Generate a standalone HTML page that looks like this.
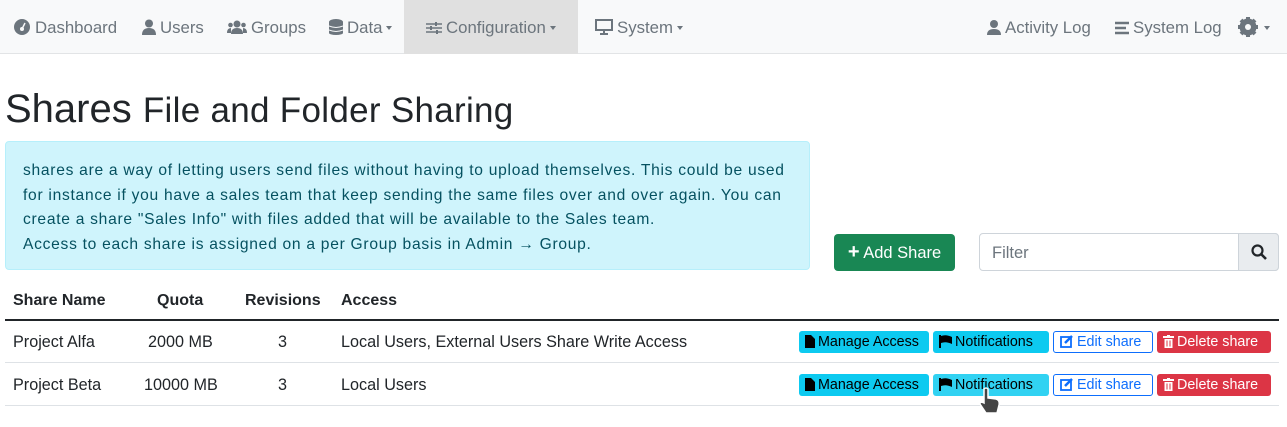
<!DOCTYPE html><html><head><style>
body{margin:0;width:1287px;height:427px;background:#fff;font-family:"Liberation Sans",sans-serif;color:#212529;position:relative;overflow:hidden}
.nav{position:absolute;left:0;top:0;width:1287px;height:53px;background:#f8f9fa;border-bottom:1px solid #e2e4e6}
.ni{position:absolute;top:1px;height:53px;line-height:53px;font-size:16.8px;color:#6c757d;white-space:nowrap}
.ni svg{vertical-align:-2px;margin-right:4px}
.car{display:inline-block;border-top:4px solid #6c757d;border-left:3.5px solid transparent;border-right:3.5px solid transparent;vertical-align:3px;margin-left:4px}
.t{position:absolute;white-space:nowrap}
.btn{position:absolute;height:22px;line-height:22px;font-size:14.3px;border-radius:3px;box-sizing:border-box;white-space:nowrap;padding-left:6px}
.bi{background:#0dcaf0;color:#000;width:130px}
.bn{background:#0dcaf0;color:#000;width:116px}
.be{border:1px solid #0d6efd;color:#0d6efd;width:100px;line-height:20px}
.bd{background:#dc3545;color:#fff;width:114px}
.btn svg{vertical-align:-2px;margin-right:3px}
.th{font-weight:bold;font-size:16px}
.td{font-size:16.2px}
</style></head><body>
<div class="nav"></div>
<div style="position:absolute;left:404px;top:0;width:174px;height:54px;background:#e0e0e0"></div>
<div class="ni" style="left:13px"><svg width="18" height="16" viewBox="0 0 18 16"><circle cx="9" cy="8" r="8" fill="#6c757d"/><circle cx="9" cy="10" r="2" fill="#f8f9fa"/><path d="M9 10 L12 4" stroke="#f8f9fa" stroke-width="1.5"/></svg>Dashboard</div>
<div class="ni" style="left:142px"><svg width="14" height="16"><circle cx="7" cy="4.5" r="4" fill="#6c757d"/><path d="M0 16 Q0 9 7 9 Q14 9 14 16Z" fill="#6c757d"/></svg>Users</div>
<div class="ni" style="left:227px"><svg width="20" height="16"><circle cx="10" cy="5" r="3.5" fill="#6c757d"/><circle cx="3.5" cy="6" r="2.3" fill="#6c757d"/><circle cx="16.5" cy="6" r="2.3" fill="#6c757d"/><path d="M4 15 Q4 9 10 9 Q16 9 16 15Z M0 14 Q0 9 4 9 L4 14Z M20 14 Q20 9 16 9 L16 14Z" fill="#6c757d"/></svg>Groups</div>
<div class="ni" style="left:329px"><svg width="14" height="16"><ellipse cx="7" cy="3" rx="7" ry="3" fill="#6c757d"/><rect x="0" y="3" width="14" height="11" fill="#6c757d"/><ellipse cx="7" cy="14" rx="7" ry="2" fill="#6c757d"/><path d="M0 7 Q7 10 14 7 M0 11 Q7 14 14 11" stroke="#f8f9fa" fill="none"/></svg>Data<span class="car"></span></div>
<div class="ni" style="left:426px"><svg width="16" height="14"><path d="M0 3H16M0 7H16M0 11H16" stroke="#6c757d" stroke-width="1.5"/><rect x="9" y="1" width="2" height="4" fill="#6c757d"/><rect x="4" y="5" width="2" height="4" fill="#6c757d"/><rect x="10" y="9" width="2" height="4" fill="#6c757d"/></svg>Configuration<span class="car"></span></div>
<div class="ni" style="left:595px"><svg width="18" height="16"><rect x="1" y="1" width="16" height="10" fill="none" stroke="#6c757d" stroke-width="2"/><path d="M9 11V15M5 15H13" stroke="#6c757d" stroke-width="2"/></svg>System<span class="car"></span></div>
<div class="ni" style="left:987px"><svg width="14" height="16"><circle cx="7" cy="5" r="4" fill="#6c757d"/><path d="M0 16 Q0 10 7 10 Q14 10 14 16Z" fill="#6c757d"/></svg>Activity Log</div>
<div class="ni" style="left:1115px"><svg width="14" height="14"><path d="M0 2H14M0 7H11M0 12H14" stroke="#6c757d" stroke-width="2.5"/></svg>System Log</div>
<div class="ni" style="left:1238px"><svg width="20" height="20" viewBox="0 0 20 20" style="vertical-align:-4px"><circle cx="10" cy="10" r="6.5" fill="none" stroke="#6c757d" stroke-width="4"/><g stroke="#6c757d" stroke-width="4"><path d="M10 0V20M0 10H20M3 3L17 17M17 3L3 17"/></g><circle cx="10" cy="10" r="3" fill="#f8f9fa"/></svg><span class="car" style="margin-left:2px"></span></div>

<div class="t" style="left:5px;top:87px;font-size:40px;font-weight:300">Shares <span style="font-size:35px;letter-spacing:0.3px">File and Folder Sharing</span></div>
<div style="position:absolute;left:5px;top:141px;width:805px;height:129px;background:#cff4fc;border:1px solid #b6effb;border-radius:4px;box-sizing:border-box;padding:17px 17px;color:#055160;font-size:15.6px;letter-spacing:0.72px;line-height:24.5px;white-space:nowrap">shares are a way of letting users send files without having to upload themselves. This could be used<br>for instance if you have a sales team that keep sending the same files over and over again. You can<br>create a share "Sales Info" with files added that will be available to the Sales team.<br>Access to each share is assigned on a per Group basis in Admin → Group.</div>
<div style="position:absolute;left:834px;top:234px;width:121px;height:37px;background:#198754;border-radius:4px;color:#fff;font-size:16.5px;line-height:37px;text-align:center"><b style="font-size:20px">+</b> Add Share</div>
<div style="position:absolute;left:979px;top:233px;width:300px;height:38px;border:1px solid #ced4da;border-radius:4px;box-sizing:border-box"></div>
<div class="t" style="left:992px;top:244px;font-size:16.5px;color:#6c757d">Filter</div>
<div style="position:absolute;left:1238px;top:233px;width:41px;height:38px;background:#e9ecef;border:1px solid #ced4da;border-radius:0 4px 4px 0;box-sizing:border-box"><svg width="16" height="16" style="position:absolute;left:12px;top:10px"><circle cx="6.5" cy="6.5" r="5" fill="none" stroke="#212529" stroke-width="2.2"/><path d="M10 10L15 15" stroke="#212529" stroke-width="2.6"/></svg></div>

<div class="t th" style="left:13px;top:292px">Share Name</div>
<div class="t th" style="left:157px;top:292px">Quota</div>
<div class="t th" style="left:245px;top:292px">Revisions</div>
<div class="t th" style="left:341px;top:292px">Access</div>
<div style="position:absolute;left:5px;top:319px;width:1274px;height:2px;background:#212529"></div>
<div class="t td" style="left:13px;top:333px">Project Alfa</div>
<div class="t td" style="left:148px;top:333px">2000 MB</div>
<div class="t td" style="left:278px;top:333px">3</div>
<div class="t td" style="left:341px;top:333px">Local Users, External Users Share Write Access</div>
<div style="position:absolute;left:5px;top:362px;width:1274px;height:1px;background:#dee2e6"></div>
<div class="t td" style="left:13px;top:376px">Project Beta</div>
<div class="t td" style="left:144px;top:376px">10000 MB</div>
<div class="t td" style="left:278px;top:376px">3</div>
<div class="t td" style="left:341px;top:376px">Local Users</div>
<div style="position:absolute;left:5px;top:405px;width:1274px;height:1px;background:#dee2e6"></div>

<div class="btn bi" style="left:799px;top:331px"><svg width="10" height="13"><path d="M0 0H6L10 4V13H0Z" fill="#000"/></svg>Manage Access</div>
<div class="btn bn" style="left:933px;top:331px"><svg width="13" height="13"><path d="M1 0V13" stroke="#000" stroke-width="2"/><path d="M2 1Q7 -1 13 2V9Q7 6 2 8Z" fill="#000"/></svg>Notifications</div>
<div class="btn be" style="left:1053px;top:331px"><svg width="14" height="13"><rect x="1" y="2" width="10" height="10" fill="none" stroke="#0d6efd" stroke-width="1.8"/><path d="M5 8L12 1" stroke="#0d6efd" stroke-width="2.5"/></svg>Edit share</div>
<div class="btn bd" style="left:1157px;top:331px"><svg width="11" height="13"><path d="M0 2H11M4 1H7" stroke="#fff" stroke-width="2"/><path d="M1.5 4H9.5V13H1.5Z" fill="#fff"/><path d="M4 5.5V11.5M7 5.5V11.5" stroke="#dc3545"/></svg>Delete share</div>

<div class="btn bi" style="left:799px;top:374px"><svg width="10" height="13"><path d="M0 0H6L10 4V13H0Z" fill="#000"/></svg>Manage Access</div>
<div class="btn bn" style="left:933px;top:374px;background:#31d2f2"><svg width="13" height="13"><path d="M1 0V13" stroke="#000" stroke-width="2"/><path d="M2 1Q7 -1 13 2V9Q7 6 2 8Z" fill="#000"/></svg>Notifications</div>
<div class="btn be" style="left:1053px;top:374px"><svg width="14" height="13"><rect x="1" y="2" width="10" height="10" fill="none" stroke="#0d6efd" stroke-width="1.8"/><path d="M5 8L12 1" stroke="#0d6efd" stroke-width="2.5"/></svg>Edit share</div>
<div class="btn bd" style="left:1157px;top:374px"><svg width="11" height="13"><path d="M0 2H11M4 1H7" stroke="#fff" stroke-width="2"/><path d="M1.5 4H9.5V13H1.5Z" fill="#fff"/><path d="M4 5.5V11.5M7 5.5V11.5" stroke="#dc3545"/></svg>Delete share</div>
<svg width="24" height="30" style="position:absolute;left:978px;top:387px"><path d="M6 2Q8 0 10 2V11L18 12Q22 13 21 18L19 26H8L2 17Q2 14 6 16Z" fill="#444" stroke="#fff" stroke-width="1.5"/></svg>
</body></html>
